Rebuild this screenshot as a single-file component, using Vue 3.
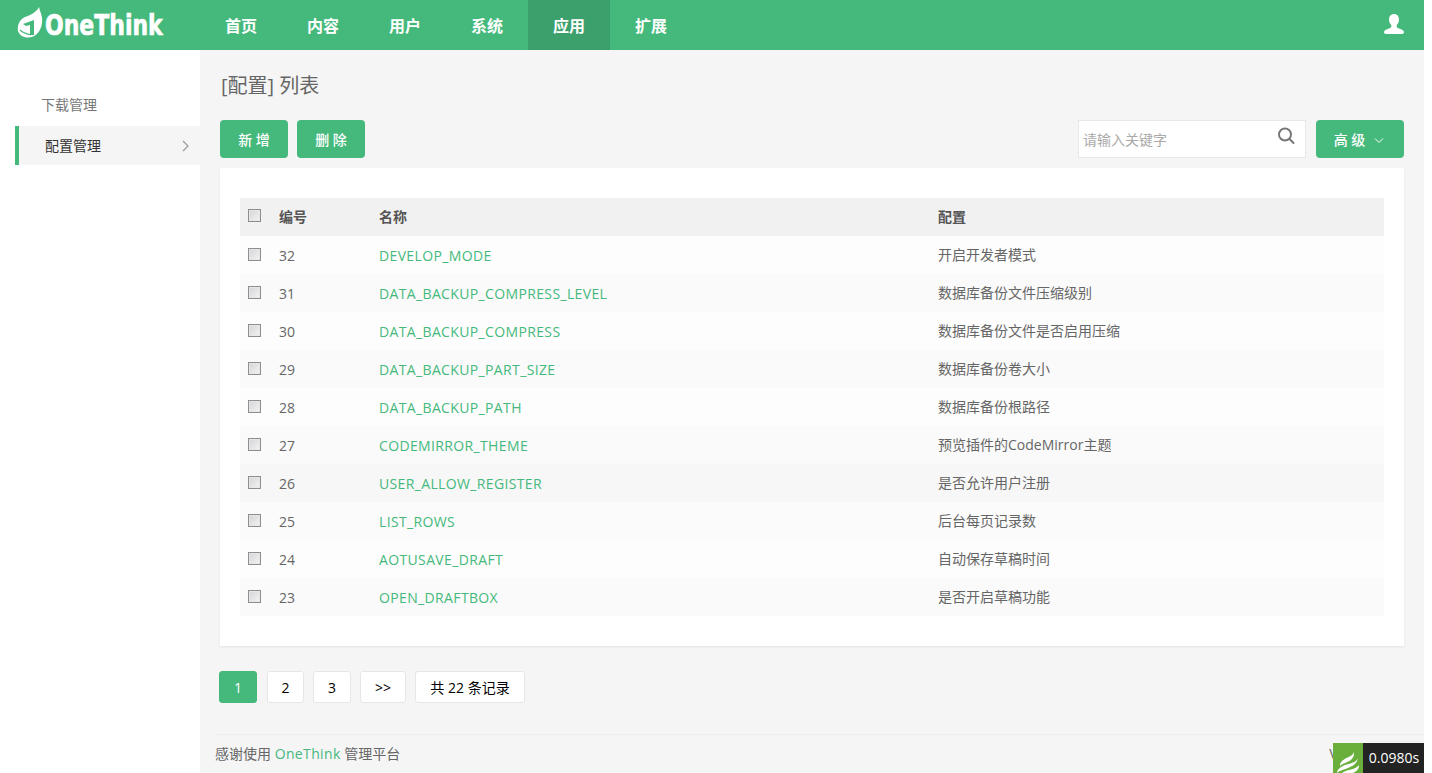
<template>
  <div class="page">
    <header class="topbar">
      <div class="logo">
        <svg class="logo-mark" width="26" height="36" viewBox="0 0 26 36">
          <path d="M22 1C23 6 26 10 25 17C24 25 19 31 12 31.500C7 32 2 29 1 25C0 19 3 13 8 11C12 9.500 18 8 22 1z" fill="#fff"/>
          <path d="M6 18L17 14V29H13V19L9 20z" fill="#45b97c"/>
          <path d="M3 24C6 27 10 28 14 29" fill="none" stroke="#45b97c" stroke-width="1.200"/>
        </svg>
        <span class="logo-text">OneThink</span>
      </div>
      <nav class="nav">
        <a v-for="item in navItems" :key="item" class="nav-item" :class="{ active: item === '应用' }">{{ item }}</a>
      </nav>
      <svg class="user" width="20" height="20" viewBox="0 0 20 20">
        <path d="M10 0c3.200 0 5 2.400 5 5.600 0 2.300-1 4.400-2.300 5.500v1.700c0 .9 1.600 1.400 3.800 2.300 2 .8 3.500 1.700 3.500 3.200 0 1-.9 1.700-2 1.700H2c-1.100 0-2-.7-2-1.700 0-1.500 1.500-2.400 3.500-3.200 2.200-.9 3.800-1.400 3.800-2.300v-1.700C6 10 5 7.900 5 5.600 5 2.400 6.800 0 10 0z" fill="#fff"/>
      </svg>
    </header>

    <div class="body">
      <aside class="side">
        <div class="side-item first">下载管理</div>
        <div class="side-item current">
          配置管理
          <svg width="8" height="12" viewBox="0 0 8 12" fill="none" stroke="#999" stroke-width="1.200"><path d="M1 1l5 5-5 5"/></svg>
        </div>
      </aside>

      <main class="main">
        <h2 class="title">[配置] 列表</h2>

        <div class="tools">
          <div class="tool-btns">
            <button class="btn">新 增</button>
            <button class="btn">删 除</button>
          </div>
          <div class="tool-search">
            <div class="search">
              <span class="placeholder">请输入关键字</span>
              <svg width="18" height="18" viewBox="0 0 18 18" fill="none" stroke="#777" stroke-width="2"><circle cx="8" cy="7.500" r="6"/><path d="M12.500 12l4 4" stroke-linecap="round"/></svg>
            </div>
            <button class="btn adv">
              高 级
              <svg width="10" height="6" viewBox="0 0 10 6" fill="none" stroke="#fff" stroke-width="1"><path d="M1 .5l4 4 4-4"/></svg>
            </button>
          </div>
        </div>

        <section class="card">
          <table class="table">
            <colgroup>
              <col style="width: 39px" />
              <col style="width: 100px" />
              <col style="width: 559px" />
              <col />
            </colgroup>
            <thead>
              <tr>
                <th><span class="check"></span></th>
                <th><span class="cell">编号</span></th>
                <th><span class="cell">名称</span></th>
                <th><span class="cell">配置</span></th>
              </tr>
            </thead>
            <tbody>
              <tr v-for="row in rows" :key="row.id">
                <td><span class="check"></span></td>
                <td>{{ row.id }}</td>
                <td><a class="link">{{ row.name }}</a></td>
                <td><span class="cell">{{ row.note }}</span></td>
              </tr>
            </tbody>
          </table>
        </section>

        <div class="pager">
          <span class="pg on w38">1</span>
          <span class="pg w37">2</span>
          <span class="pg w38">3</span>
          <span class="pg w46">&gt;&gt;</span>
          <span class="pg w110">共 22 条记录</span>
        </div>

        <footer class="foot">
          <span>感谢使用 <a class="foot-link">OneThink</a> 管理平台</span>
          <span class="ver">V1.1.141101</span>
        </footer>
      </main>
    </div>

    <div class="trace">
      <div class="trace-logo">
        <svg width="30" height="30" viewBox="0 0 30 30">
          <path d="M21 9C20 13 15 14 11 16.500C8 18.500 7 20 7 23C11 19 22 19 21 9z" fill="#fff"/>
          <path d="M25 15C23 21 14 20 8 24C6 25.500 4 27 4 30C9 25 23 26 25 15z" fill="#fff"/>
          <path d="M26 22C23 27 14 26 9 30H20C24 28 26 26 26 22z" fill="#fff"/>
        </svg>
      </div>
      <div class="trace-time">0.0980s</div>
    </div>
  </div>
</template>

<script setup>
const navItems = ['首页', '内容', '用户', '系统', '应用', '扩展']

const rows = [
  { id: 32, name: 'DEVELOP_MODE', note: '开启开发者模式' },
  { id: 31, name: 'DATA_BACKUP_COMPRESS_LEVEL', note: '数据库备份文件压缩级别' },
  { id: 30, name: 'DATA_BACKUP_COMPRESS', note: '数据库备份文件是否启用压缩' },
  { id: 29, name: 'DATA_BACKUP_PART_SIZE', note: '数据库备份卷大小' },
  { id: 28, name: 'DATA_BACKUP_PATH', note: '数据库备份根路径' },
  { id: 27, name: 'CODEMIRROR_THEME', note: '预览插件的CodeMirror主题' },
  { id: 26, name: 'USER_ALLOW_REGISTER', note: '是否允许用户注册' },
  { id: 25, name: 'LIST_ROWS', note: '后台每页记录数' },
  { id: 24, name: 'AOTUSAVE_DRAFT', note: '自动保存草稿时间' },
  { id: 23, name: 'OPEN_DRAFTBOX', note: '是否开启草稿功能' }
]
</script>

<style>
html, body { background: #fff; }
</style>

<style scoped>
.page {
  position: relative;
  width: 1424px;
  height: 773px;
  overflow: hidden;
  font-family: "Open Sans", "Noto Sans CJK SC", sans-serif;
  font-size: 14px;
  color: #666;
}

/* top bar */
.topbar {
  display: flex;
  align-items: center;
  height: 50px;
  background: #45b97c;
}
.logo {
  display: flex;
  align-items: center;
  width: 200px;
  padding-left: 17px;
  box-sizing: border-box;
}
.logo-mark { margin-top: -2px; }
.logo-text {
  margin-left: 2px;
  font-family: "DejaVu Sans", sans-serif;
  font-size: 28px;
  font-weight: 700;
  color: #fff;
  display: inline-block;
  transform: scaleX(0.785);
  transform-origin: left center;
  -webkit-text-stroke: 0.7px #fff;
}
.nav { display: flex; height: 100%; }
.nav-item {
  display: flex;
  align-items: center;
  justify-content: center;
  width: 82px;
  font-size: 16px;
  font-weight: 700;
  color: #fff;
}
.nav-item.active { background: #3ca06d; }
.user { margin-left: auto; margin-right: 20px; margin-top: -2px; }

/* sidebar + main */
.body { display: flex; height: 723px; }
.side {
  width: 200px;
  flex-shrink: 0;
  padding: 36px 0 0 15px;
  box-sizing: border-box;
  background: #fff;
}
.side-item {
  height: 39px;
  line-height: 39px;
  padding-left: 26px;
  font-size: 14px;
  color: #777;
}
.side-item.first { height: 40px; line-height: 37px; }
.side-item.current {
  display: flex;
  align-items: center;
  justify-content: space-between;
  padding: 0 10px 0 26px;
  border-left: 4px solid #45b97c;
  background: #f5f5f5;
  color: #333;
}
.main {
  flex: 1;
  display: flex;
  flex-direction: column;
  padding: 0 20px 0 20px;
  background: #f5f5f5;
  min-width: 0;
}
.title {
  margin: 22px 0 0 1px;
  height: 28px;
  line-height: 28px;
  font-size: 20px;
  font-weight: 400;
  color: #666;
}
.tools {
  display: flex;
  justify-content: space-between;
  margin-top: 20px;
}
.tool-btns { display: flex; gap: 9px; }
.tool-search { display: flex; gap: 10px; }
.btn {
  width: 68px;
  height: 38px;
  padding: 0;
  border: 0;
  border-radius: 4px;
  background: #45b97c;
  color: #fff;
  font-family: inherit;
  font-size: 14px;
  font-weight: 500;
}
.adv {
  display: flex;
  align-items: center;
  justify-content: center;
  gap: 9px;
  width: 88px;
  padding-right: 2px;
}
.adv svg { margin-top: 4px; }
.search {
  display: flex;
  align-items: center;
  justify-content: space-between;
  width: 228px;
  height: 38px;
  box-sizing: border-box;
  padding: 0 10px 0 4px;
  background: #fff;
  border: 1px solid #e8e8e8;
}
.search svg { margin-top: -6px; }
.placeholder { font-size: 14px; color: #aaa; }

/* table card */
.card {
  margin-top: 10px;
  padding: 30px 20px;
  background: #fff;
  box-shadow: 0 1px 2px rgba(0, 0, 0, 0.08);
}
.table {
  width: 100%;
  border-collapse: collapse;
  table-layout: fixed;
  font-size: 14px;
}
.table th, .table td {
  height: 38px;
  padding: 0;
  text-align: left;
}
.table th:first-child, .table td:first-child { padding-left: 8px; }
.table th {
  background: #f1f1f1;
  font-weight: 700;
  color: #555;
}
.table td { background: #fdfdfd; color: #666; }
.table tr:nth-child(even) td { background: #fafafa; }
.table tbody tr:nth-child(7) td { background: #f7f7f7; }
.table tbody tr:nth-child(8) td { background: #fbfbfb; }
.cell { display: block; margin-top: -2px; }
.link { letter-spacing: 0.36px; color: #45b97c; }
.check {
  display: block;
  width: 13px;
  height: 13px;
  box-sizing: border-box;
  margin-top: -3px;
  border: 1px solid #8e8e8e;
  background: linear-gradient(135deg, #d4d4d8, #f4f4f4);
  box-shadow: inset 0 0 0 1px #e6e6e6;
}
.table td .check { margin-top: -1px; }

/* pager */
.pager {
  display: flex;
  gap: 9px;
  margin-top: 25px;
  margin-left: -1px;
}
.pg {
  display: flex;
  align-items: center;
  justify-content: center;
  height: 32px;
  box-sizing: border-box;
  background: #fff;
  border: 1px solid #e6e6e6;
  border-radius: 3px;
  font-size: 14px;
  color: #000;
}
.pg.on { margin-right: 1px; background: #45b97c; border-color: #45b97c; color: #fff; }
.w37 { width: 37px; }
.w38 { width: 38px; }
.w46 { width: 46px; }
.w110 { width: 110px; }

/* footer */
.foot {
  display: flex;
  justify-content: space-between;
  margin: 31px -20px 0 -5px;
  padding: 10px 15px 0 0;
  border-top: 1px solid #ececec;
  font-size: 14px;
  line-height: 18px;
}
.foot-link { letter-spacing: 0.36px; color: #45b97c; }
.ver { color: #666; }

/* floating page-trace badge */
.trace {
  position: absolute;
  right: 0;
  bottom: 0;
  display: flex;
  height: 30px;
}
.trace-logo {
  width: 30px;
  height: 30px;
  background: #6aae3c;
}
.trace-time {
  width: 61px;
  padding-left: 1px;
  box-sizing: border-box;
  line-height: 30px;
  text-align: center;
  background: #232323;
  color: #fff;
  font-size: 14px;
}
</style>
